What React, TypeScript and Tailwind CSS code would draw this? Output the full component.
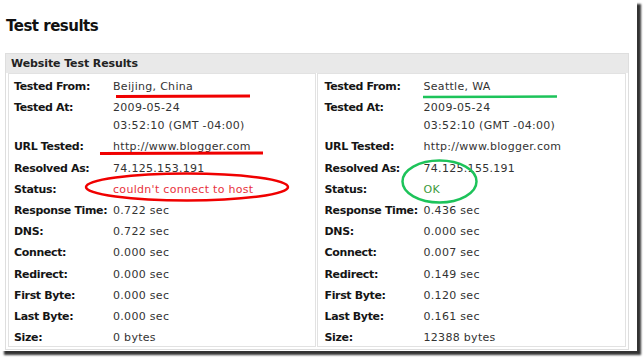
import React from "react";

type Row = { label: string; value: React.ReactNode };

const left: Row[] = [
  { label: "Tested From:", value: "Beijing, China" },
  { label: "Tested At:", value: (<>2009-05-24<br />03:52:10 (GMT -04:00)</>) },
  { label: "URL Tested:", value: "http://www.blogger.com" },
  { label: "Resolved As:", value: "74.125.153.191" },
  { label: "Status:", value: <span className="text-[#e8333d]">couldn't connect to host</span> },
  { label: "Response Time:", value: "0.722 sec" },
  { label: "DNS:", value: "0.722 sec" },
  { label: "Connect:", value: "0.000 sec" },
  { label: "Redirect:", value: "0.000 sec" },
  { label: "First Byte:", value: "0.000 sec" },
  { label: "Last Byte:", value: "0.000 sec" },
  { label: "Size:", value: "0 bytes" },
];

const right: Row[] = [
  { label: "Tested From:", value: "Seattle, WA" },
  { label: "Tested At:", value: (<>2009-05-24<br />03:52:10 (GMT -04:00)</>) },
  { label: "URL Tested:", value: "http://www.blogger.com" },
  { label: "Resolved As:", value: "74.125.155.191" },
  { label: "Status:", value: <span className="text-[#3c9a3c]">OK</span> },
  { label: "Response Time:", value: "0.436 sec" },
  { label: "DNS:", value: "0.000 sec" },
  { label: "Connect:", value: "0.007 sec" },
  { label: "Redirect:", value: "0.149 sec" },
  { label: "First Byte:", value: "0.120 sec" },
  { label: "Last Byte:", value: "0.161 sec" },
  { label: "Size:", value: "12388 bytes" },
];

function Panel({ rows, pad }: { rows: Row[]; pad: string }) {
  return (
    <div className={`flex-1 border border-[#e2e2e2] bg-white pt-[4px] ${pad}`}>
      <div className="flex flex-col gap-[3.2px]">
        {rows.map((r, i) => (
          <div key={i} className="flex leading-[18px] text-[11px]">
            <div className="w-[99px] shrink-0 font-bold text-[#151515] tracking-[-0.35px]">{r.label}</div>
            <div className="text-[#333] tracking-[0.3px]">{r.value}</div>
          </div>
        ))}
      </div>
    </div>
  );
}

export default function App() {
  return (
    <div className="bg-white w-[644px] h-[358px]" style={{ fontFamily: '"DejaVu Sans", Verdana, sans-serif' }}>
      <div className="relative w-[637px] h-[351px] bg-white shadow-[4px_4px_2px_rgba(0,0,0,0.8)]">
        <h1 className="pl-[6px] pt-[16px] h-[36px] text-[15px] leading-[20px] font-bold text-[#111] tracking-[-0.5px]">Test results</h1>
        <div className="ml-[5px] mt-[17px] w-[624px] border border-[#dedede] px-[2px] pb-[2px]">
          <div className="h-[19px] bg-[#e9e9e9] -mx-[2px] pl-[5px] text-[11px] leading-[19px] font-bold text-[#222] tracking-[-0.1px]">
            Website Test Results
          </div>
          <div className="flex gap-[1px] h-[274px]">
            <Panel rows={left} pad="pl-[5px]" />
            <Panel rows={right} pad="pl-[7px]" />
          </div>
        </div>
        <svg className="absolute inset-0 pointer-events-none" width="637" height="351" viewBox="0 0 637 351">
          <line x1="116" y1="96.5" x2="250" y2="96" stroke="#f00000" strokeWidth="3" />
          <line x1="100" y1="153.5" x2="263" y2="153" stroke="#f00000" strokeWidth="3" />
          <ellipse cx="187" cy="187" rx="101" ry="13.5" fill="none" stroke="#f00000" strokeWidth="2.5" />
          <line x1="423" y1="97" x2="557" y2="96.5" stroke="#1dc35a" strokeWidth="2.5" />
          <ellipse cx="439.5" cy="181.5" rx="37" ry="21" fill="none" stroke="#1dc35a" strokeWidth="2.5" />
        </svg>
      </div>
    </div>
  );
}
